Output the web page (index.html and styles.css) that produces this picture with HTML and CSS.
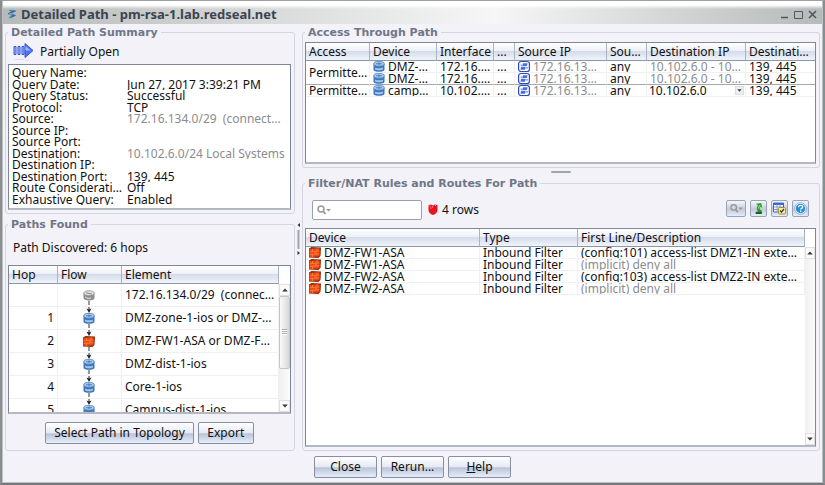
FILE: index.html
```html
<!DOCTYPE html>
<html lang="en">
<head>
<meta charset="utf-8">
<title>Detailed Path - pm-rsa-1.lab.redseal.net</title>
<link rel="stylesheet" href="styles.css">
</head>
<body>

<svg class="defs" width="0" height="0" aria-hidden="true">
    <symbol id="router" viewBox="0 0 12 12" preserveAspectRatio="none">
        <path d="M.5 3v6.500c0 3 11 3 11 0V3z" fill="#3f78bd"/>
        <ellipse cx="6" cy="3" rx="5.300" ry="2.600" fill="#a9c9ef" stroke="#4f7fc0" stroke-width=".8"/>
        <path d="M3 3h6M6 1.500v3" stroke="#4674b4" stroke-width=".9"/>
        <path d="M2 7c2 1.300 6 1.300 8 0v2c-2 1.400-6 1.400-8 0z" fill="#a5c8f0"/>
    </symbol>
    <symbol id="subnet" viewBox="0 0 12 12" preserveAspectRatio="none">
        <path d="M.5 3v5.500c0 4 11 4 11 0V3z" fill="#8d8d8d"/>
        <ellipse cx="6" cy="3.500" rx="5.300" ry="2.800" fill="#ddd" stroke="#888" stroke-width=".7"/>
        <path d="M3 3l6 1.500" stroke="#888"/>
        <path d="M2 7.500c2 2 5 2 6 1" stroke="#eee" fill="none"/>
    </symbol>
    <symbol id="firewall" viewBox="0 0 12 11" preserveAspectRatio="none">
        <path d="M0 1.500L2.500 0 12 .5l-.5 8.500L9.500 11 0 10.500z" fill="#8a3014"/>
        <path d="M.5 2l10-.7v8l-10 .7z" fill="#f2451a"/>
        <path d="M.5 4.800l10-.8M.5 7.500l10-.8M3.500 2v2.500M7 4.500V7M3.500 7.500V10M8 1.500v2.500" stroke="#ffa040" stroke-width=".6"/>
    </symbol>
    <symbol id="host" viewBox="0 0 12 12" preserveAspectRatio="none">
        <rect x=".6" y=".6" width="10.800" height="10.800" rx="2.500" fill="#fff" stroke="#2a4cc0" stroke-width="1.200"/>
        <path d="M5 2.500h4.500L9 5.500H4.500zM3 6.200h4.500L7 9.500H2.500z" fill="#4a6ede"/>
        <path d="M7.500 7.500H10M2.500 4.500h2" stroke="#4a6ede"/>
    </symbol>
    <symbol id="lens" viewBox="0 0 14 10">
        <circle cx="4" cy="4" r="3" fill="none" stroke="#999" stroke-width="1.500"/>
        <path d="M6 6l2.500 3" stroke="#999" stroke-width="1.800"/>
        <path d="M9 4h5l-2.500 2.500z" fill="#999"/>
    </symbol>
    <symbol id="up" viewBox="0 0 7 5"><path d="M0 4.500L3.500.5 7 4.500z" fill="#333"/></symbol>
    <symbol id="down" viewBox="0 0 7 5"><path d="M0 .5L3.500 4.500 7 .5z" fill="#333"/></symbol>
    <symbol id="flow-in" viewBox="0 0 12 6"><path d="M6 0v3" stroke="#222"/><path d="M3.500 1.500L6 2.500l2.500-1L6 6z" fill="#222"/></symbol>
    <symbol id="flow-out" viewBox="0 0 12 6"><path d="M6 0v6" stroke="#333" stroke-dasharray="4 1"/></symbol>
</svg>

<div class="window">
    <header class="titlebar">
        <svg class="app-icon" viewBox="0 0 8 12"><path d="M1.500 2l4.500 1.200-4.500 2.400L6 7.500 1.500 10" fill="none" stroke="#3f6f9c" stroke-width="2"/><path d="M1 1.500h5M1.500 5.800h3M1.500 10.500H6" stroke="#8fc0e0" stroke-width="1.300"/></svg>
        <h1>Detailed Path - pm-rsa-1.lab.redseal.net</h1>
        <button class="win" aria-label="Minimize"><svg viewBox="0 0 9 9"><path d="M1 7.500h7" stroke="#4d5866" stroke-width="1.500"/></svg></button>
        <button class="win" aria-label="Maximize"><svg viewBox="0 0 9 9"><path d="M.5 1.500h8v7h-8z" fill="none" stroke="#4d5866"/></svg></button>
        <button class="win" aria-label="Close window"><svg viewBox="0 0 9 9"><path d="M1 1l7 7M8 1L1 8" stroke="#4d5866" stroke-width="1.600"/></svg></button>
    </header>

    <main class="panes">
        <div class="left">
            <fieldset class="summary">
                <legend>Detailed Path Summary</legend>
                <div class="status">
                    <svg class="arrow" viewBox="0 0 20 20">
                        <path d="M.5 4.500h2v8h-2zM4.500 4.500h2v8h-2zM8.500 4.500h2v8h-2z" fill="#a9bdfa" stroke="#3454d8"/>
                        <path d="M11.500 4.500V1.500L19.500 8.500l-8 7v-3z" fill="#4c74f4" stroke="#3454d8"/>
                        <path d="M12 4l5 4.500h-5z" fill="#9db8ff"/>
                        <path d="M1 17.500h10M12 18.500h3" stroke="#d5dcf6"/>
                    </svg>
                    <span>Partially Open</span>
                </div>
                <dl class="query">
                    <dt>Query Name:</dt><dd></dd>
                    <dt>Query Date:</dt><dd>Jun 27, 2017 3:39:21 PM</dd>
                    <dt>Query Status:</dt><dd>Successful</dd>
                    <dt>Protocol:</dt><dd>TCP</dd>
                    <dt>Source:</dt><dd class="dim">172.16.134.0/29 &nbsp;(connected hosts)</dd>
                    <dt>Source IP:</dt><dd></dd>
                    <dt>Source Port:</dt><dd></dd>
                    <dt>Destination:</dt><dd class="dim">10.102.6.0/24 Local Systems</dd>
                    <dt>Destination IP:</dt><dd></dd>
                    <dt>Destination Port:</dt><dd>139, 445</dd>
                    <dt>Route Considerations:</dt><dd>Off</dd>
                    <dt>Exhaustive Query:</dt><dd>Enabled</dd>
                </dl>
            </fieldset>

            <fieldset class="paths">
                <legend>Paths Found</legend>
                <p>Path Discovered: 6 hops</p>
                <div class="box">
                    <table class="hops">
                        <colgroup><col><col><col></colgroup>
                        <thead><tr><th>Hop</th><th>Flow</th><th>Element</th></tr></thead>
                        <tbody>
                        <tr><td></td><td><svg class="flow"><use href="#subnet" y="6" width="12" height="11"/><use href="#flow-out" y="17" width="12" height="6"/></svg></td><td>172.16.134.0/29 &nbsp;(connected hosts)</td></tr>
                        <tr><td>1</td><td><svg class="flow"><use href="#flow-in" width="12" height="6"/><use href="#router" y="6" width="12" height="11"/><use href="#flow-out" y="17" width="12" height="6"/></svg></td><td>DMZ-zone-1-ios or DMZ-zone-2-ios</td></tr>
                        <tr><td>2</td><td><svg class="flow"><use href="#flow-in" width="12" height="6"/><use href="#firewall" y="6" width="12" height="11"/><use href="#flow-out" y="17" width="12" height="6"/></svg></td><td>DMZ-FW1-ASA or DMZ-FW2-ASA</td></tr>
                        <tr><td>3</td><td><svg class="flow"><use href="#flow-in" width="12" height="6"/><use href="#router" y="6" width="12" height="11"/><use href="#flow-out" y="17" width="12" height="6"/></svg></td><td>DMZ-dist-1-ios</td></tr>
                        <tr><td>4</td><td><svg class="flow"><use href="#flow-in" width="12" height="6"/><use href="#router" y="6" width="12" height="11"/><use href="#flow-out" y="17" width="12" height="6"/></svg></td><td>Core-1-ios</td></tr>
                        <tr><td>5</td><td><svg class="flow"><use href="#flow-in" width="12" height="6"/><use href="#router" y="6" width="12" height="11"/><use href="#flow-out" y="17" width="12" height="6"/></svg></td><td>Campus-dist-1-ios</td></tr>
                        </tbody>
                    </table>
                    <div class="scroll">
                        <button aria-label="Scroll up"><svg><use href="#up"/></svg></button>
                        <div class="track"><div class="thumb"></div></div>
                        <button aria-label="Scroll down"><svg><use href="#down"/></svg></button>
                    </div>
                </div>
                <div class="actions">
                    <button class="btn">Select Path in Topology</button>
                    <button class="btn">Export</button>
                </div>
            </fieldset>
        </div>

        <div class="split-v"><svg viewBox="0 0 5 32"><path d="M4 0v4L1.500 2zM1.500 28v4L4 30z" fill="#333"/><path d="M2.500 7v19" stroke="#a0a4b0" stroke-width="2"/></svg></div>

        <div class="right">
            <fieldset class="access">
                <legend>Access Through Path</legend>
                <div class="box">
                    <table class="rules">
                        <colgroup><col><col><col><col><col><col><col><col></colgroup>
                        <thead><tr><th>Access</th><th>Device</th><th>Interface</th><th>...</th><th>Source IP</th><th>Source Port</th><th>Destination IP</th><th>Destination Port</th></tr></thead>
                        <tbody>
                        <tr>
                            <td rowspan="2" class="span">Permitted By</td>
                            <td class="short"><div><svg class="ico"><use href="#router"/></svg>DMZ-zone-1</div></td><td><div>172.16.134.1</div></td><td><div>...</div></td>
                            <td class="dim short"><div><svg class="ico"><use href="#host"/></svg>172.16.134.0/29</div></td><td><div>any</div></td><td class="dim"><div>10.102.6.0 - 10.102.6.255</div></td><td><div>139, 445</div></td>
                        </tr>
                        <tr class="last">
                            <td class="short"><div><svg class="ico"><use href="#router"/></svg>DMZ-zone-2</div></td><td><div>172.16.134.2</div></td><td><div>...</div></td>
                            <td class="dim short"><div><svg class="ico"><use href="#host"/></svg>172.16.134.0/29</div></td><td><div>any</div></td><td class="dim"><div>10.102.6.0 - 10.102.6.255</div></td><td><div>139, 445</div></td>
                        </tr>
                        <tr>
                            <td><div>Permitted By</div></td>
                            <td class="short"><div><svg class="ico"><use href="#router"/></svg>campus-dist</div></td><td><div>10.102.6.1</div></td><td><div>...</div></td>
                            <td class="dim short"><div><svg class="ico"><use href="#host"/></svg>172.16.134.0/29</div></td><td><div>any</div></td>
                            <td class="pick"><div><select aria-label="Destination IP"><option>10.102.6.0</option></select><svg><use href="#down"/></svg></div></td><td><div>139, 445</div></td>
                        </tr>
                        </tbody>
                    </table>
                </div>
            </fieldset>

            <div class="split-h"></div>

            <fieldset class="filter">
                <legend>Filter/NAT Rules and Routes For Path</legend>
                <div class="toolbar">
                    <div class="search"><svg><use href="#lens"/></svg><input type="text" aria-label="Search rules"></div>
                    <svg class="shield" viewBox="0 0 10 11"><path d="M.5 1L3 .5l2 1 2-1L9.500 1V6c0 3-3 4.500-4.500 5C3.500 10.500.5 9 .5 6z" fill="#e8141f"/><path d="M1.500 2h1M4 3h1M7 1.500h1M2.500 4h1" stroke="#fbb"/></svg>
                    <span class="count">4 rows</span>
                    <button class="tool wide" aria-label="Find"><svg viewBox="0 0 14 10"><use href="#lens"/></svg></button>
                    <button class="tool" aria-label="Go up"><svg viewBox="0 0 12 12"><path d="M3.500 1.500L8.500 1l1 4.500-1.700-1.200C6.500 5.500 6.800 6.500 9 8v3H3.500V9.500h3C4 8 3.800 5.500 5.500 3z" fill="#2f9e2f"/><path d="M3.500 9h5.500v2H3.500z" fill="#176317"/><path d="M5.500 6L7.500 3" stroke="#8be07a"/></svg></button>
                    <button class="tool" aria-label="Columns"><svg viewBox="0 0 13 12"><path d="M.5.5h10v9H.5z" fill="#fff" stroke="#3a66c8"/><path d="M.5 1.500h10" stroke="#3a66c8" stroke-width="2"/><path d="M4 2v7.500M7 2v7.500M1 4.500h9M1 7h9" stroke="#7c9ce0"/><rect x="5.500" y="5" width="7" height="6.500" rx="1" fill="#f8eda0" stroke="#a89030"/><path d="M7 8l1.500 1.500L11 6.500" fill="none" stroke="#333" stroke-width="1.200"/></svg></button>
                    <button class="tool" aria-label="Help topics"><svg viewBox="0 0 13 13"><circle cx="6.500" cy="6.500" r="5.800" fill="#fff" stroke="#8fb0cc"/><circle cx="6.500" cy="6.500" r="4.700" fill="#2191d8"/><path d="M4.500 5.300c0-2.500 4.200-2.500 4.200-.2 0 1.400-2 1.200-2 2.500M6.700 8.600v1.300" fill="none" stroke="#fff" stroke-width="1.300"/></svg></button>
                </div>
                <div class="box">
                    <table class="rules lines">
                        <colgroup><col><col><col></colgroup>
                        <thead><tr><th>Device</th><th>Type</th><th>First Line/Description</th></tr></thead>
                        <tbody>
                        <tr><td><div><svg class="ico"><use href="#firewall"/></svg>DMZ-FW1-ASA</div></td><td><div>Inbound Filter</div></td><td><div>(config:101) access-list DMZ1-IN extended permit</div></td></tr>
                        <tr><td><div><svg class="ico"><use href="#firewall"/></svg>DMZ-FW1-ASA</div></td><td><div>Inbound Filter</div></td><td class="dim"><div>(implicit) deny all</div></td></tr>
                        <tr><td><div><svg class="ico"><use href="#firewall"/></svg>DMZ-FW2-ASA</div></td><td><div>Inbound Filter</div></td><td><div>(config:103) access-list DMZ2-IN extended permit</div></td></tr>
                        <tr><td><div><svg class="ico"><use href="#firewall"/></svg>DMZ-FW2-ASA</div></td><td><div>Inbound Filter</div></td><td class="dim"><div>(implicit) deny all</div></td></tr>
                        </tbody>
                    </table>
                    <div class="scroll">
                        <button aria-label="Scroll up"><svg><use href="#up"/></svg></button>
                        <div class="track"></div>
                        <button aria-label="Scroll down"><svg><use href="#down"/></svg></button>
                    </div>
                </div>
            </fieldset>
        </div>
    </main>

    <footer class="buttons">
        <button class="btn">Close</button>
        <button class="btn">Rerun...</button>
        <button class="btn"><u>H</u>elp</button>
    </footer>
</div>

</body>
</html>
```
FILE: styles.css
```css
* {
    box-sizing: border-box;
}
body {
    margin: 0;
    font-family: "Noto Sans", Tahoma, sans-serif;
    font-size: 12px;
    line-height: 16px;
    color: #111;
}
button, input, select {
    font: inherit;
    color: inherit;
    padding: 0;
    margin: 0;
}
.defs {
    position: absolute;
}

/* window frame */
.window {
    display: flex;
    flex-direction: column;
    height: 100vh;
    background: #f2f2f8;
    border: 2px solid #8c8c90;
    border-top: 1px solid #a0a0a0;
    border-bottom-color: #76767c;
    box-shadow: inset 1px -1px 0 #b9c4c2, inset -1px 0 0 #b9c4c2;
}
.titlebar {
    display: flex;
    align-items: center;
    gap: 5px;
    height: 23px;
    margin: 0 1px;
    padding: 3px 5px 0;
    background: linear-gradient(#fff 4px, #fff0 8px), linear-gradient(90deg, #b6bab9, #f6f6f6 60%, #b6bab9);
}
.titlebar h1 {
    flex: 1;
    margin: 0;
    font-size: 13px;
    color: #3b4450;
}
.app-icon {
    width: 8px;
    height: 12px;
}
.win {
    border: 0;
    background: none;
    height: 9px;
}
.win svg {
    display: block;
    width: 9px;
    height: 9px;
}

/* panes */
.panes {
    flex: 1;
    display: grid;
    grid-template-columns: 290fr 7px 518fr;
    min-height: 0;
    padding: 2px 3px 0;
}
.left, .right {
    display: flex;
    flex-direction: column;
    min-width: 0;
    min-height: 0;
}
fieldset {
    display: flex;
    flex-direction: column;
    min-width: 0;
    min-height: 0;
    margin: 0;
    padding: 0 3px 3px 2px;
    border: 1px solid #d3d6e0;
    border-radius: 3px;
}
legend {
    padding: 0 3px;
    font-family: "DejaVu Sans", Verdana, sans-serif;
    font-size: 11px;
    font-weight: bold;
    line-height: 13px;
    color: #6f7787;
}
.summary {
    height: 188px;
}
.paths {
    flex: 1;
    margin-top: 4px;
}
.access {
    height: 142px;
    padding-top: 3px;
}
.filter {
    flex: 1;
}
.split-v {
    display: flex;
    align-items: center;
    justify-content: center;
}
.split-v svg {
    width: 5px;
    height: 32px;
}
.split-h {
    align-self: center;
    width: 20px;
    height: 2px;
    margin: 3px 0 4px;
    background: #a0a4b0;
    border-radius: 1px;
}

/* summary */
.status {
    display: flex;
    align-items: center;
    gap: 6px;
    height: 25px;
    padding-left: 5px;
}
.arrow {
    width: 21px;
    height: 20px;
}
.query {
    flex: 1;
    display: grid;
    grid-template-columns: 112px 1fr;
    grid-template-rows: repeat(12, 1fr);
    column-gap: 1px;
    min-height: 0;
    margin: 0;
    padding: 2px 5px 3px 3px;
    background: #fff;
}
.query, .box {
    border: 1px solid #7f8796;
    border-width: 1px 1px 2px;
    border-bottom-color: #b4b8c0;
}
.query dt, .query dd {
    margin: 0;
    min-height: 0;
    line-height: 11px;
    white-space: nowrap;
    overflow: hidden;
    text-overflow: ellipsis;
}
.query dd {
    padding-left: 2px;
}
.dim {
    color: #8c8c8c;
}

/* tables */
.box {
    flex: 1;
    display: flex;
    min-height: 0;
    overflow: hidden;
    background: #fff;
}
table {
    flex: 1;
    align-self: flex-start;
    width: 100%;
    min-width: 0;
    table-layout: fixed;
    border-collapse: separate;
    border-spacing: 0;
}
th, td {
    padding: 0 1px 0 3px;
    text-align: left;
    font-weight: normal;
    white-space: nowrap;
    overflow: hidden;
    text-overflow: ellipsis;
}
th {
    height: 18px;
    background: linear-gradient(#fff, #edf0f8 45%, #d5dbe9 50%, #f0f5fc);
    border-right: 1px solid #a9b3c6;
    border-bottom: 1px solid #8d97aa;
}
td {
    border-right: 1px solid #f0f0f3;
    border-bottom: 1px solid #f0f0f3;
}
.rules tbody td {
    height: 12px;
    line-height: 11px;
}
.rules td div {
    height: 11px;
    overflow: hidden;
    text-overflow: ellipsis;
}
.rules .last td, .rules td.span {
    border-bottom-color: #a4a8b0;
}
.rules td.span {
    vertical-align: middle;
}
.rules td.short {
    padding-right: 6px;
}
.ico {
    width: 12px;
    height: 11px;
    margin-right: 3px;
    vertical-align: top;
}
.access col:nth-child(1) { width: 64px; }
.access col:nth-child(2) { width: 67px; }
.access col:nth-child(3) { width: 57px; }
.access col:nth-child(4) { width: 21px; }
.access col:nth-child(5) { width: 92px; }
.access col:nth-child(6) { width: 40px; }
.access col:nth-child(7) { width: 99px; }
.access col:nth-child(8) { width: 72px; }
.lines col:nth-child(1) { width: 174px; }
.lines col:nth-child(2) { width: 98px; }
.lines col:nth-child(3) { width: 227px; }
.hops col:nth-child(1) { width: 49px; }
.hops col:nth-child(2) { width: 64px; }
.hops col:nth-child(3) { width: 157px; }
.hops td {
    height: 23px;
}
.hops td:first-child {
    padding-right: 3px;
    text-align: right;
}
.hops td:nth-child(2) {
    padding: 0 2px 0 0;
    text-align: center;
}
.flow {
    display: block;
    width: 12px;
    height: 23px;
    margin: 0 auto -1px;
}
.rules td.pick, .pick div {
    position: relative;
    padding: 0;
}
.pick select {
    display: block;
    width: 100%;
    height: 11px;
    padding-left: 2px;
    line-height: 11px;
    border: 0;
    background: none;
    appearance: none;
}
.pick svg {
    position: absolute;
    top: 1px;
    right: 1px;
    width: 9px;
    height: 9px;
    padding: 2px 1px;
    background: #eee;
    border: 1px solid #ddd;
    pointer-events: none;
}

/* scroll bars */
.scroll {
    display: flex;
    flex-direction: column;
    width: 12px;
    margin-top: 18px;
}
.scroll button {
    height: 12px;
    border: 1px solid #e0e0e4;
    background: #fafafa;
}
.scroll svg {
    display: block;
    width: 6px;
    height: 4px;
    margin: 0 auto;
}
.track {
    flex: 1;
    background: linear-gradient(90deg, #f0f0f0, #fbfbfb);
}
.thumb {
    height: 70%;
    border: 1px solid #c4c6cc;
    border-radius: 2px;
    background:
        repeating-linear-gradient(#aaa 0 1px, #fff 1px 2px) center / 5px 6px no-repeat,
        linear-gradient(90deg, #fafafa, #d8d9dc);
}

/* paths */
.paths p {
    margin: 0;
    padding: 9px 5px;
}
.actions {
    display: flex;
    justify-content: center;
    gap: 4px;
    padding: 8px 0 3px;
}
.btn {
    min-width: 56px;
    height: 22px;
    padding: 0 8px;
    border: 1px solid #8790a2;
    border-radius: 2px;
    background: linear-gradient(#fff, #e6eaf4 48%, #bcc5d8 54%, #e4edfb);
}

/* filter toolbar */
.toolbar {
    display: flex;
    align-items: flex-start;
    gap: 4px;
    height: 38px;
    padding: 10px 7px 0;
}
.search {
    display: flex;
    align-items: center;
    width: 110px;
    height: 20px;
    padding-left: 4px;
    background: #fff;
    border: 1px solid #9aa1ae;
    border-radius: 2px;
}
.search svg {
    width: 14px;
    height: 10px;
}
.search input {
    flex: 1;
    min-width: 0;
    border: 0;
    background: none;
    outline: none;
}
.shield {
    width: 10px;
    height: 11px;
    margin: 4px 0 0 2px;
}
.count {
    flex: 1;
    line-height: 20px;
}
.tool {
    display: flex;
    align-items: center;
    justify-content: center;
    width: 17px;
    height: 17px;
    border: 1px solid #9aa3b5;
    border-radius: 2px;
    background: linear-gradient(#f6f7fb, #c3cbdc 55%, #e4edfb);
}
.tool svg {
    width: 13px;
    height: 13px;
}
.wide {
    width: 20px;
}

/* dialog buttons */
.buttons {
    display: flex;
    justify-content: center;
    gap: 4px;
    padding: 5px 0;
}
.buttons .btn {
    width: 63px;
}
```
